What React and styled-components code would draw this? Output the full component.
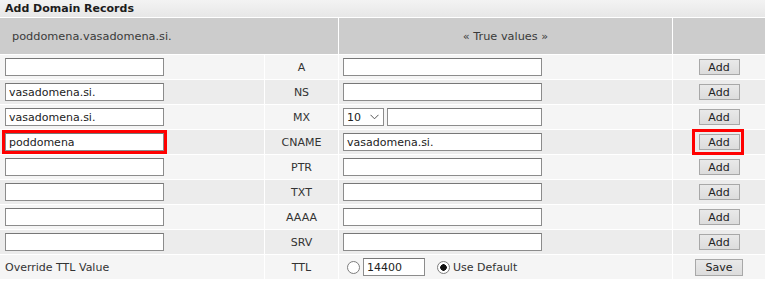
import React from 'react';
import styled, { createGlobalStyle } from 'styled-components';

const Global = createGlobalStyle`
  html, body { margin: 0; padding: 0; background: #fff; }
  body {
    font-family: "DejaVu Sans", Verdana, sans-serif;
    font-size: 11px;
    color: #333;
  }
`;

const Panel = styled.div`
  width: 765px;
`;

const TitleBar = styled.div`
  height: 17px;
  display: flex;
  align-items: center;
  padding-left: 5px;
  background: linear-gradient(#f3f3f3, #e7e7e7);
  font-weight: bold;
  font-size: 11px;
  color: #1c1c1c;
  margin-bottom: 1px;
`;

const Table = styled.div`
  display: flex;
  flex-direction: column;
  gap: 1px;
`;

const HeaderRow = styled.div`
  display: grid;
  grid-template-columns: 338px 333px 1fr;
  gap: 1px;
  height: 36px;
`;

const HeaderCell = styled.div`
  background: #cccccc;
  display: flex;
  align-items: center;
  justify-content: ${p => (p.$center ? 'center' : 'flex-start')};
  padding-left: ${p => (p.$center ? 0 : 12)}px;
  color: #3a3a3a;
  font-size: 11.3px;
`;

const Row = styled.div`
  display: grid;
  grid-template-columns: 264px 73px 333px 1fr;
  gap: 1px;
  height: 24px;
`;

const Cell = styled.div`
  background: ${p => (p.$alt ? '#ececec' : '#f5f5f5')};
  display: flex;
  align-items: center;
  justify-content: ${p => p.$justify || 'flex-start'};
  padding-left: ${p => p.$pad || 0}px;
  color: #333;
`;

const TextInput = styled.input`
  box-sizing: border-box;
  width: ${p => p.$w}px;
  height: 18px;
  margin: 0 ${p => p.$mr || 0}px 0 ${p => p.$ml || 0}px;
  padding: 0 3px;
  border: 1px solid #8c8c8c;
  border-top-color: #777;
  background: #fff;
  font-family: "DejaVu Sans", Verdana, sans-serif;
  font-size: 11px;
  color: #222;
  outline: ${p => (p.$highlight ? '3px solid #ff0000' : 'none')};
  outline-offset: 0;
`;

const SelectBox = styled.div`
  box-sizing: border-box;
  width: 41px;
  height: 18px;
  margin-right: 3px;
  border: 1px solid #8c8c8c;
  background: #fff;
  display: flex;
  align-items: center;
  justify-content: space-between;
  padding: 0 4px 0 3px;
  color: #222;
`;

const Btn = styled.button`
  box-sizing: border-box;
  width: ${p => p.$w || 41}px;
  height: ${p => p.$h || 16}px;
  margin: 0;
  padding: 0;
  border: 1px solid #a8a8a8;
  background: linear-gradient(#e9e9e9, #dcdcdc);
  font-family: "DejaVu Sans", Verdana, sans-serif;
  font-size: 11px;
  color: #222;
  line-height: 1;
`;

const Highlight = styled.span`
  position: relative;
  display: inline-flex;
  &::after {
    content: '';
    position: absolute;
    top: -5px;
    bottom: -5px;
    left: -7px;
    right: -4px;
    border: 3px solid #ff0000;
    pointer-events: none;
  }
`;

const Radio = styled.span`
  box-sizing: border-box;
  width: 13px;
  height: 13px;
  border-radius: 50%;
  border: 1px solid #7d7d7d;
  background: radial-gradient(circle, ${p => (p.$checked ? '#111 0 3px' : '#fff 0 3px')}, #fff 3.5px);
  flex: none;
`;

const Label = styled.span`
  color: #333;
  margin-left: 3px;
`;

const Chevron = () => (
  <svg width="9" height="6" viewBox="0 0 9 6">
    <path d="M0.5 0.8 L4.5 4.8 L8.5 0.8" fill="none" stroke="#555" strokeWidth="1" />
  </svg>
);

const records = [
  { name: '', type: 'A', value: '' },
  { name: 'vasadomena.si.', type: 'NS', value: '' },
  { name: 'vasadomena.si.', type: 'MX', value: '', mx: true },
  { name: 'poddomena', type: 'CNAME', value: 'vasadomena.si.', highlight: true },
  { name: '', type: 'PTR', value: '' },
  { name: '', type: 'TXT', value: '' },
  { name: '', type: 'AAAA', value: '' },
  { name: '', type: 'SRV', value: '' },
];

export default function App() {
  return (
    <>
      <Global />
      <Panel>
        <TitleBar>Add Domain Records</TitleBar>
        <Table>
          <HeaderRow>
            <HeaderCell>poddomena.vasadomena.si.</HeaderCell>
            <HeaderCell $center>« True values »</HeaderCell>
            <HeaderCell />
          </HeaderRow>
          {records.map((r, i) => {
            const alt = i % 2 === 1;
            return (
              <Row key={r.type}>
                <Cell $alt={alt} $pad={5}>
                  <TextInput $w={159} defaultValue={r.name} $highlight={r.highlight} />
                </Cell>
                <Cell $alt={alt} $justify="center">{r.type}</Cell>
                <Cell $alt={alt} $pad={4}>
                  {r.mx ? (
                    <>
                      <SelectBox>
                        <span>10</span>
                        <Chevron />
                      </SelectBox>
                      <TextInput $w={155} defaultValue="" />
                    </>
                  ) : (
                    <TextInput $w={199} defaultValue={r.value} />
                  )}
                </Cell>
                <Cell $alt={alt} $justify="center">
                  {r.highlight ? (
                    <Highlight>
                      <Btn>Add</Btn>
                    </Highlight>
                  ) : (
                    <Btn>Add</Btn>
                  )}
                </Cell>
              </Row>
            );
          })}
          <Row>
            <Cell $pad={5}>Override TTL Value</Cell>
            <Cell $justify="center">TTL</Cell>
            <Cell $pad={8}>
              <Radio />
              <TextInput $w={62} $ml={3} $mr={12} defaultValue="14400" />
              <Radio $checked />
              <Label>Use Default</Label>
            </Cell>
            <Cell $justify="center">
              <Btn $w={48} $h={17}>Save</Btn>
            </Cell>
          </Row>
        </Table>
      </Panel>
    </>
  );
}
